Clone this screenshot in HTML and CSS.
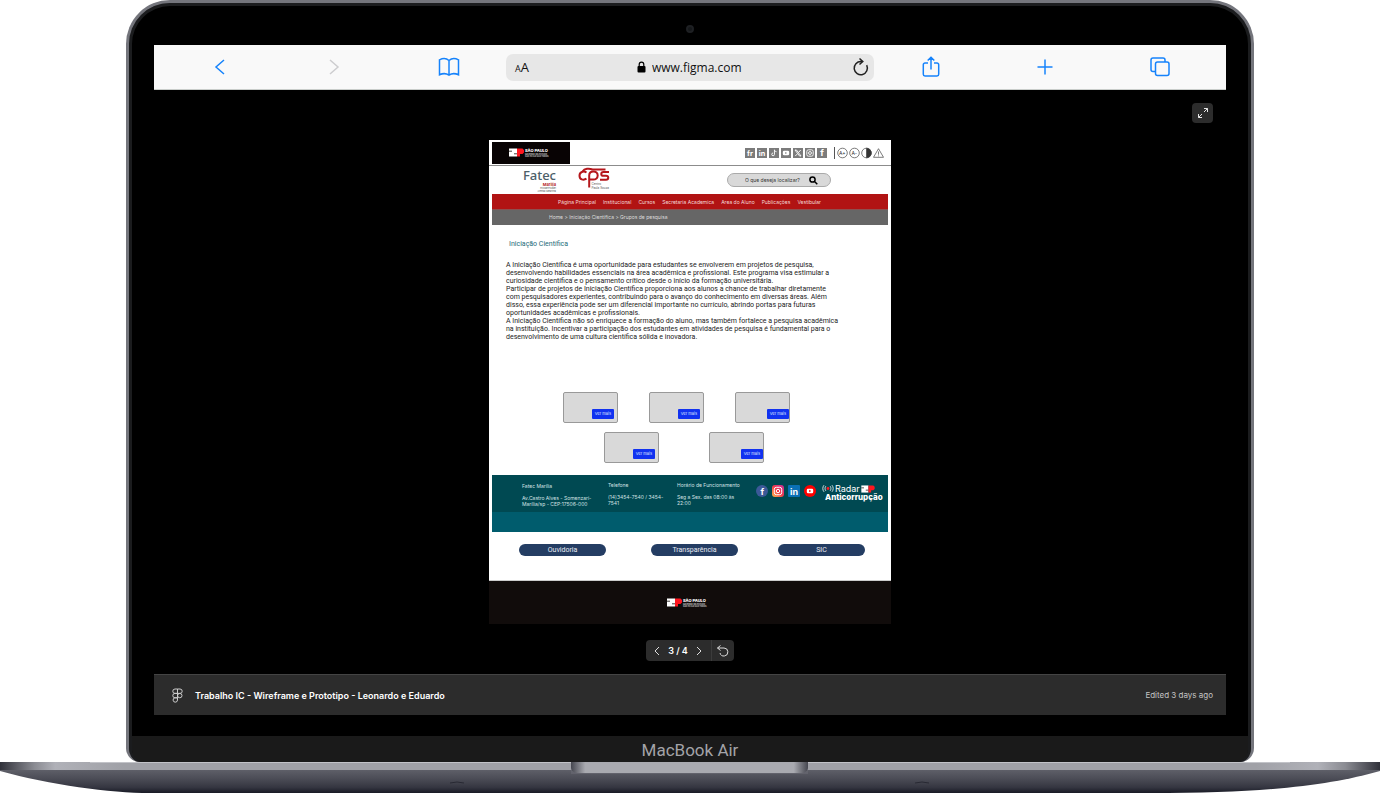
FILE: index.html
```html
<!DOCTYPE html>
<html lang="pt-BR">
<head>
<meta charset="utf-8">
<meta name="viewport" content="width=device-width, initial-scale=1">
<title>Trabalho IC - Wireframe e Prototipo</title>
<link rel="stylesheet" href="styles.css">
</head>
<body>
<svg class="defs" width="0" height="0" aria-hidden="true">
  <symbol id="sp-flag" viewBox="0 0 15 9">
    <path fill="#fff" d="M0 .5h8v8H0z"/>
    <path stroke="#110c0b" stroke-width=".8" d="M0 3.200h3M5 5.800h3"/>
    <path fill="#ff161f" d="M8 .5h5.500l1.500 1.500v2.500L13.500 6H11v2.500H8z"/>
  </symbol>
</svg>
<div class="laptop">
  <div class="lid">
    <div class="bezel"><span class="camera"></span></div>
    <main class="screen">
      <header class="browser">
        <button class="tool" aria-label="Voltar"><svg width="24" height="24" viewBox="0 0 24 24"><path d="M16 5l-8 7 8 7"/></svg></button>
        <button class="tool tool-off" aria-label="Avançar"><svg width="24" height="24" viewBox="0 0 24 24"><path d="M8 5l8 7-8 7"/></svg></button>
        <button class="tool" aria-label="Favoritos"><svg width="24" height="24" viewBox="0 0 24 24"><path d="M12 5.500c-2.500-2.300-6.500-2.300-9.500-.7v15c3-1.400 7-1.400 9.500.4 2.500-1.800 6.500-1.800 9.500-.4v-15c-3-1.600-7-1.600-9.500.7zM12 5.500v14.700"/></svg></button>
        <div class="address">
          <span class="aa"><small>A</small>A</span>
          <span class="site">
            <svg width="9" height="12" viewBox="0 0 9 12"><rect x=".5" y="5" width="8" height="6.500" rx="1"/><path d="M2.200 5.500V3.500a2.300 2.300 0 0 1 4.600 0v2" fill="none" stroke="#000" stroke-width="1.200"/></svg>
            <input class="url" aria-label="Endereço" value="www.figma.com">
          </span>
          <button class="reload" aria-label="Recarregar"><svg width="18" height="20" viewBox="0 0 18 20"><path d="M14.700 8.200A6.600 6.600 0 1 1 9 4.500h1.500M7.500 1.500l3.300 3-3.300 3"/></svg></button>
        </div>
        <button class="tool" aria-label="Compartilhar"><svg width="24" height="24" viewBox="0 0 24 24"><path d="M9 8H6a1.700 1.700 0 0 0-1.700 1.700v9.600A1.700 1.700 0 0 0 6 21h12a1.700 1.700 0 0 0 1.700-1.700V9.700A1.700 1.700 0 0 0 18 8h-3M12 14.500V2.500M8.700 5.500L12 2.200l3.300 3.300"/></svg></button>
        <button class="tool" aria-label="Nova aba"><svg width="24" height="24" viewBox="0 0 24 24"><path d="M12 4.500v15M4.500 12h15"/></svg></button>
        <button class="tool" aria-label="Abas"><svg width="24" height="24" viewBox="0 0 24 24"><rect x="7.500" y="7" width="13.500" height="13.500" rx="2"/><path d="M7.500 16.500H5a2 2 0 0 1-2-2V5a2 2 0 0 1 2-2h10a2 2 0 0 1 2 2v2"/></svg></button>
      </header>

      <section class="stage">
        <button class="expand" aria-label="Tela cheia"><svg width="12" height="12" viewBox="0 0 12 12"><path d="M7 1.500h3.500V5M10.500 1.500L7 5M5 10.500H1.500V7M1.500 10.500L5 7"/></svg></button>

        <article class="page">
          <div class="topbar">
            <div class="gov"><svg width="15" height="9"><use href="#sp-flag"/></svg><div class="gov-text"><b>SÃO PAULO</b><small>GOVERNO DO ESTADO</small><small>SÃO PAULO SÃO TODOS</small></div></div>
            <div class="social">
              <svg viewBox="0 0 11 11"><text x="5.500" y="8.500">fr</text></svg>
              <svg viewBox="0 0 11 11"><text x="5.500" y="8.500">in</text></svg>
              <svg viewBox="0 0 11 11"><path class="ln" d="M6 2v5a1.500 1.500 0 1 1-1.500-1.500M6 2c.2 1.300 1 2 2.300 2.100"/></svg>
              <svg viewBox="0 0 11 11"><rect x="2" y="3" width="7" height="5" rx="1.500" fill="#fff"/><path d="M4.700 4.300v2.400l2-1.200z" fill="#7b7b7b"/></svg>
              <svg viewBox="0 0 11 11"><path class="ln" d="M2.200 2.200h1.600l5 6.600H7.200zM8.500 2.200L6 5M5 6.300L2.500 8.800"/></svg>
              <svg viewBox="0 0 11 11"><rect class="ln" x="2" y="2" width="7" height="7" rx="1.800"/><circle class="ln" cx="5.500" cy="5.500" r="1.600"/></svg>
              <svg viewBox="0 0 11 11"><text class="fb" x="5.500" y="9">f</text></svg>
            </div>
            <div class="access">
              <svg viewBox="0 0 11 11"><circle cx="5.500" cy="5.500" r="4.800"/><text x="5.300" y="7.300">A+</text></svg>
              <svg viewBox="0 0 11 11"><circle cx="5.500" cy="5.500" r="4.800"/><text x="5.300" y="7.300">A-</text></svg>
              <svg viewBox="0 0 11 11"><circle cx="5.500" cy="5.500" r="4.800"/><path class="solid" d="M5.500.7a4.800 4.800 0 0 1 0 9.600z"/></svg>
              <svg viewBox="0 0 11 11"><path d="M5.500 1.200L10.500 9.800H.5zM5.500 4v3.200M5.500 8v.8"/></svg>
            </div>
          </div>

          <div class="brand">
            <div class="fatec"><b>Fatec</b><strong>Marília</strong><small>Estudante Rafael</small><small>Almeida Camarinha</small></div>
            <svg class="cps" width="33" height="24" viewBox="0 0 33 24">
              <g fill="none" stroke="#b5171c" stroke-width="2">
                <path d="M8.500 5.500C5.500 3.500 1.500 5 1.500 8.700c0 3.800 3.800 5 7 3"/>
                <path d="M4.500 4.500C6.500 1.500 11 1 14.500 2.500h13"/>
                <path d="M11.200 20.500V8.500c0-2.500 1.800-4 4.200-4s4.300 1.600 4.300 4-1.900 4.100-4.300 4.100h-4"/>
                <path d="M31 5h-5.500c-3 0-3 3.800 0 3.800h2.500c3 0 3 3.900 0 3.900h-6"/>
              </g>
              <text x="13.500" y="18">Centro</text><text x="13.500" y="22">Paula Souza</text>
            </svg>
            <label class="search">
              <input type="text" placeholder="O que deseja localizar?" aria-label="O que deseja localizar?">
              <svg width="9" height="9" viewBox="0 0 9 9"><circle cx="3.500" cy="3.500" r="2.600"/><path d="M5.500 5.500L8.300 8.300"/></svg>
            </label>
          </div>

          <nav class="menu">
            <a href="#">Página Principal</a><a href="#">Institucional</a><a href="#">Cursos</a><a href="#">Secretaria Academica</a><a href="#">Area do Aluno</a><a href="#">Publicações</a><a href="#">Vestibular</a>
          </nav>
          <div class="crumbs">Home &gt; Iniciação Científica &gt; Grupos de pesquisa</div>

          <div class="content">
            <h1>Iniciação Científica</h1>
            <p>A Iniciação Científica é uma oportunidade para estudantes se envolverem em projetos de pesquisa,<br>desenvolvendo habilidades essenciais na área acadêmica e profissional. Este programa visa estimular a<br>curiosidade científica e o pensamento crítico desde o início da formação universitária.</p>
            <p>Participar de projetos de Iniciação Científica proporciona aos alunos a chance de trabalhar diretamente<br>com pesquisadores experientes, contribuindo para o avanço do conhecimento em diversas áreas. Além<br>disso, essa experiência pode ser um diferencial importante no currículo, abrindo portas para futuras<br>oportunidades acadêmicas e profissionais.</p>
            <p>A Iniciação Científica não só enriquece a formação do aluno, mas também fortalece a pesquisa acadêmica<br>na instituição. Incentivar a participação dos estudantes em atividades de pesquisa é fundamental para o<br>desenvolvimento de uma cultura científica sólida e inovadora.</p>
          </div>

          <div class="cards">
            <div class="row">
              <div class="card"><button>Ver mais</button></div>
              <div class="card"><button>Ver mais</button></div>
              <div class="card card-edge"><button>Ver mais</button></div>
            </div>
            <div class="row row-two">
              <div class="card"><button>Ver mais</button></div>
              <div class="card card-edge"><button>Ver mais</button></div>
            </div>
          </div>

          <footer class="contact">
            <div class="info">
              <div class="col col-addr"><h2>Fatec Marília</h2><p>Av.Castro Alves - Somenzari-<br>Marília/sp - CEP:17506-000</p></div>
              <div class="col col-tel"><h2>Telefone</h2><p>(14)3454-7540 / 3454-<br>7541</p></div>
              <div class="col col-hours"><h2>Horário de Funcionamento</h2><p>Seg a Sex. das 08:00 às<br>22:00</p></div>
              <div class="nets">
                <svg viewBox="0 0 12 12"><circle cx="6" cy="6" r="6" fill="#3b5998"/><text x="6.200" y="9.700">f</text></svg>
                <svg viewBox="0 0 12 12"><defs><linearGradient id="ig" x1="0" y1="1" x2="1" y2="0"><stop stop-color="#ffc04a"/><stop offset=".5" stop-color="#f23a4c"/><stop offset="1" stop-color="#c42c9d"/></linearGradient></defs><rect width="12" height="12" rx="3" fill="url(#ig)"/><rect x="2.300" y="2.300" width="7.400" height="7.400" rx="2" fill="none" stroke="#fff"/><circle cx="6" cy="6" r="1.700" fill="none" stroke="#fff"/></svg>
                <svg viewBox="0 0 12 12"><rect width="12" height="12" rx="1" fill="#0a70b5"/><text x="6" y="9.500">in</text></svg>
                <svg viewBox="0 0 12 12"><circle cx="6" cy="6" r="6" fill="#f00"/><rect x="2.800" y="3.700" width="6.400" height="4.600" rx="1.200" fill="#fff"/><path fill="#f00" d="M5.200 4.800v2.400l2-1.200z"/></svg>
              </div>
              <div class="radar">
                <div class="radar-top">
                  <svg width="12" height="9" viewBox="0 0 12 9"><g fill="none" stroke="#fff" stroke-width=".8"><path d="M2 1.200C.4 3 .4 6 2 7.800M3.800 2.200c-1 1.400-1 3.200 0 4.600M10 1.200c1.600 1.800 1.600 4.800 0 6.600M8.200 2.200c1 1.400 1 3.200 0 4.600"/></g><circle cx="6" cy="4.500" r="1.400" fill="#ff161f"/></svg>
                  <span>Radar</span>
                  <svg width="14" height="8"><use href="#sp-flag"/></svg>
                </div>
                <b>Anticorrupção</b>
              </div>
            </div>
          </footer>

          <div class="links">
            <button>Ouvidoria</button><button>Transparência</button><button>SIC</button>
          </div>
          <div class="bottom"><svg width="15" height="9"><use href="#sp-flag"/></svg><div class="gov-text"><b>SÃO PAULO</b><small>GOVERNO DO ESTADO</small><small>SÃO PAULO SÃO TODOS</small></div></div>
        </article>

        <div class="pager">
          <button aria-label="Anterior"><svg width="8" height="10" viewBox="0 0 8 10"><path d="M6 1L2 5l4 4"/></svg></button>
          <span>3 / 4</span>
          <button aria-label="Próximo"><svg width="8" height="10" viewBox="0 0 8 10"><path d="M2 1l4 4-4 4"/></svg></button>
          <button class="restart" aria-label="Reiniciar"><svg width="14" height="14" viewBox="0 0 14 14"><path d="M4.500 1.500L1.500 4l3 2.500M1.500 4H8a4 4 0 1 1-4 5"/></svg></button>
        </div>
      </section>

      <div class="filebar">
        <svg width="11" height="15" viewBox="0 0 11 15"><path d="M5.500 1H3a2.200 2.200 0 0 0 0 4.400h2.500zM5.500 1H8a2.200 2.200 0 0 1 0 4.400H5.500zM5.500 5.400H3a2.200 2.200 0 0 0 0 4.400h2.500zM5.500 9.800H3A2.200 2.200 0 1 0 5.500 12z"/><circle cx="7.800" cy="7.600" r="2.200"/></svg>
        <b>Trabalho IC - Wireframe e Prototipo - Leonardo e Eduardo</b>
        <span>Edited 3 days ago</span>
      </div>
    </main>
    <div class="chin">MacBook Air</div>
  </div>
  <svg class="base" viewBox="0 0 1380 31" preserveAspectRatio="none" aria-hidden="true">
    <defs>
      <linearGradient id="deck"><stop stop-color="#30313a"/><stop offset=".025" stop-color="#8a8b92"/><stop offset=".04" stop-color="#b0b1b8"/><stop offset=".09" stop-color="#a0a1a7"/><stop offset=".91" stop-color="#a0a1a7"/><stop offset=".955" stop-color="#b0b1b8"/><stop offset=".975" stop-color="#8a8b92"/><stop offset="1" stop-color="#30313a"/></linearGradient>
      <linearGradient id="under" x2="0" y2="1"><stop stop-color="#5e5f68"/><stop offset=".4" stop-color="#4a4b55"/><stop offset=".75" stop-color="#353641"/><stop offset="1" stop-color="#181a25"/></linearGradient>
      <linearGradient id="notch"><stop stop-color="#45464f"/><stop offset=".06" stop-color="#a9aab0"/><stop offset=".94" stop-color="#a9aab0"/><stop offset="1" stop-color="#45464f"/></linearGradient>
    </defs>
    <path fill="url(#under)" d="M0 8h1380v1c-50 14-110 22-230 22H150C110 31 50 23 0 9z"/>
    <path fill="url(#deck)" d="M0 0h1380v8H0z"/>
    <path fill="#c2c3c8" d="M90 0h1200v1H90z"/>
    <path fill="#6d6e77" d="M571 0h237v12H571z" opacity=".5"/>
    <path fill="url(#notch)" d="M571 0h237v5c0 4-3 6-8 6H579c-5 0-8-2-8-6z"/>
    <path fill="none" stroke="#282933" d="M450 21q7-2 14 0M915 21q7-2 14 0"/>
  </svg>
</div>
</body>
</html>
```
FILE: styles.css
```css
* { box-sizing: border-box; }
body { margin: 0; background: #fff; font-family: Inter, "Liberation Sans", sans-serif; }
button { margin: 0; padding: 0; border: 0; background: none; font: inherit; color: inherit; cursor: pointer; }
input { margin: 0; padding: 0; border: 0; background: none; font: inherit; color: inherit; outline: 0; }
h1, h2, p { margin: 0; font-weight: 400; }
a { color: inherit; text-decoration: none; }
svg { display: block; flex: none; }
.defs { position: absolute; }

/* laptop shell */
.lid {
  margin: 0 126px;
  padding: 0 3px;
  border-radius: 44px 44px 14px 14px;
  border: 3px solid #74757c;
  border-bottom: 0;
  background: #000;
  box-shadow: inset 0 0 0 3px #1b1c1e;
  overflow: hidden;
}
.bezel { height: 42px; display: flex; justify-content: center; padding-top: 22px; }
.camera { width: 8px; height: 8px; border-radius: 50%; background: #15171a; border: 2px solid #1e2023; }
.screen { margin: 0 22px; }
.chin {
  margin-top: 21px;
  height: 26px;
  border-radius: 0 0 12px 12px;
  background: #1a1a1a;
  color: #a3a3a8;
  font-family: Roboto, sans-serif;
  font-size: 17px;
  line-height: 28px;
  text-align: center;
}
.base { width: 100%; height: 31px; }

/* browser toolbar */
.browser {
  display: flex;
  align-items: center;
  height: 45px;
  padding: 0 9px;
  background: #f9f9f9;
  border-bottom: 1px solid #c9cdca;
}
.tool { flex: 1; display: flex; justify-content: center; color: #1683fb; }
.tool-off { color: #cdcdcf; }
.tool svg { fill: none; stroke: currentColor; stroke-width: 1.500; }
.address {
  display: flex;
  align-items: center;
  justify-content: space-between;
  width: 368px;
  height: 27px;
  padding: 0 4px 0 9px;
  border-radius: 7px;
  background: #e7e7e7;
  font-family: "Open Sans", "Noto Sans", sans-serif;
  font-size: 12px;
  color: #111;
}
.aa { font-size: 13px; }
.aa small { font-size: 9px; }
.site { display: flex; align-items: center; gap: 6px; }
.url { width: 92px; height: 20px; }
.reload svg { fill: none; stroke: #222; stroke-width: 1.500; }

/* prototype stage */
.stage {
  position: relative;
  display: flex;
  flex-direction: column;
  align-items: center;
  gap: 16px;
  padding: 50px 0 13px;
}
.expand {
  position: absolute;
  top: 13px;
  right: 13px;
  display: grid;
  place-items: center;
  width: 21px;
  height: 20px;
  border-radius: 4px;
  background: #2c2c2c;
}
.expand svg { fill: none; stroke: #e6e6e6; }
.pager {
  display: flex;
  align-items: center;
  height: 21px;
  padding-left: 7px;
  border-radius: 4px;
  background: #2c2c2c;
  color: #fff;
  font-size: 9px;
  font-weight: 600;
}
.pager span { width: 34px; text-align: center; }
.pager svg { fill: none; stroke: #ddd; }
.pager .restart { margin-left: 8px; padding: 4px 4px 3px; border-left: 1px solid #3c3c3c; }
.filebar {
  display: flex;
  align-items: center;
  height: 41px;
  padding: 0 13px 0 18px;
  border-top: 1px solid #444;
  background: #2c2c2c;
  font-size: 9px;
  color: #fff;
}
.filebar svg { margin-right: 12px; fill: none; stroke: #ccc; }
.filebar b { flex: 1; font-weight: 600; }
.filebar span { font-size: 8px; color: #c4c4c4; }

/* site page inside the prototype */
.page { width: 402px; background: #fff; font-size: 5px; }
.topbar {
  display: flex;
  align-items: center;
  height: 26px;
  padding: 0 7px 0 3px;
  border-bottom: 1px solid #8c8c8c;
}
.gov { display: flex; gap: 1px; width: 78px; height: 22px; padding: 6px 0 0 17px; background: #080304; }
.gov-text { color: #fff; white-space: nowrap; }
.gov-text b, .gov-text small { display: block; }
.gov-text b { font-size: 4px; font-weight: 800; line-height: 5px; }
.gov-text small { font-size: 2px; line-height: 2px; }
.social { display: flex; gap: 2px; margin-left: auto; }
.social svg { width: 10px; height: 10px; background: #7b7b7b; }
.social text { font: 700 8px Inter, sans-serif; fill: #fff; text-anchor: middle; }
.social .fb { font-size: 10px; }
.ln { fill: none; stroke: #fff; }
.access { display: flex; gap: 1px; margin-left: 7px; padding-left: 2px; border-left: 1px solid #555; }
.access svg { width: 11px; height: 12px; fill: none; stroke: #444; stroke-width: .7; }
.access text { font: 5px Inter, sans-serif; fill: #333; stroke: none; text-anchor: middle; }
.access .solid { fill: #333; }
.brand { display: flex; align-items: flex-start; height: 28px; padding-left: 33px; }
.fatec { display: flex; flex-direction: column; align-items: flex-end; width: 34px; padding-top: 2px; color: #4c6069; }
.fatec b { font: 500 13px/14px "Noto Sans", sans-serif; }
.fatec strong { font-size: 4px; line-height: 5px; color: #b5171c; }
.fatec small { font-size: 2px; line-height: 3px; color: #555; }
.cps { margin: 1px 0 0 22px; }
.cps text { font: 3px Inter, sans-serif; fill: #555; }
.search {
  display: flex;
  align-items: center;
  justify-content: space-between;
  width: 104px;
  height: 14px;
  margin: 7px 0 0 116px;
  padding: 0 12px 0 17px;
  border: 1px solid #aaa;
  border-radius: 7px;
  background: #d9d9d9;
}
.search input { width: 60px; height: 10px; }
.search input::placeholder { color: #333; opacity: 1; }
.search svg { fill: none; stroke: #000; stroke-width: 1.500; }
.menu {
  display: flex;
  gap: 7px;
  height: 16px;
  margin: 0 3px;
  padding-left: 66px;
  border-bottom: 1px solid #8d5050;
  background: #b11313;
  color: #f3d9d9;
  line-height: 16px;
  white-space: nowrap;
}
.crumbs { height: 15px; margin: 0 3px; padding-left: 57px; background: #666; color: #ddd; line-height: 15px; }
.content { padding: 15px 0 0 17px; font-family: Roboto, sans-serif; font-size: 7px; line-height: 8px; color: #222; white-space: nowrap; }
.content h1 { margin-bottom: 13px; padding-left: 3px; font-size: 7px; line-height: 8px; color: #1c6b78; }
.cards { padding-top: 51px; }
.row { display: flex; gap: 31px; padding-left: 74px; }
.row-two { gap: 50px; padding: 9px 0 0 115px; }
.card {
  display: flex;
  align-items: flex-end;
  justify-content: flex-end;
  width: 55px;
  height: 31px;
  padding: 0 3px 3px 0;
  border: 1px solid #999;
  border-radius: 2px;
  background: #d9d9d9;
}
.card-edge { padding-right: 0; }
.card button { width: 22px; height: 10px; border-radius: 1px; background: #1132f0; color: #dfe4ff; font-size: 4px; line-height: 10px; }
.contact { margin: 12px 3px 0; padding-bottom: 20px; background: #005c6d; }
.info { display: flex; height: 37px; padding-left: 30px; background: #004952; color: #d3e2e4; line-height: 6px; white-space: nowrap; }
.col { padding-top: 7px; }
.col h2 { margin-bottom: 6px; font-size: 5px; line-height: 6px; }
.col-addr { width: 86px; padding-top: 8px; }
.col-tel { width: 69px; }
.col-hours { width: 79px; }
.nets { display: flex; gap: 4px; padding-top: 10px; }
.nets svg { width: 12px; height: 12px; }
.nets text { font: 700 9px Inter, sans-serif; fill: #fff; text-anchor: middle; }
.radar { padding: 9px 0 0 6px; color: #fff; }
.radar-top { display: flex; align-items: center; gap: 1px; height: 9px; font-size: 9px; line-height: 9px; }
.radar b { display: block; padding-left: 3px; font-size: 8px; font-weight: 800; line-height: 8px; }
.links { display: grid; grid-template-columns: 132px 127px 87px; padding: 12px 0 24px 30px; border-bottom: 1px solid #ccc; }
.links button { width: 87px; height: 12px; border-radius: 6px; background: #243d63; color: #e8ecf3; font-family: Roboto, sans-serif; font-size: 7px; line-height: 13px; }
.bottom { display: flex; gap: 1px; height: 43px; padding: 17px 0 0 178px; background: #110c0b; }
```
